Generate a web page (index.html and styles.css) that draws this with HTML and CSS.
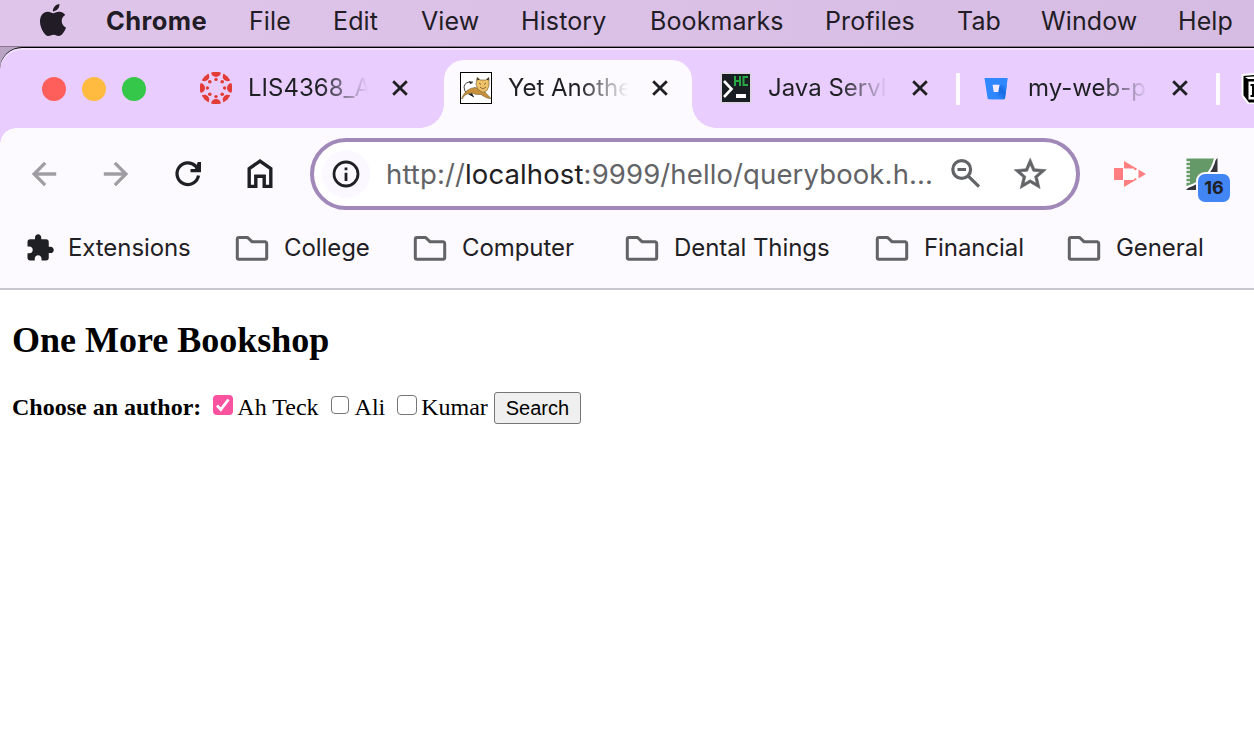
FILE: index.html
```html
<!DOCTYPE html>
<html lang="en">
<head>
<meta charset="utf-8">
<title>Yet Another Bookshop</title>
<link rel="stylesheet" href="styles.css">
</head>
<body>
<svg class="defs" width="0" height="0" aria-hidden="true">
  <symbol id="folder" viewBox="0 0 34 26"><path d="M4 2.500h8.500l4.500 4.200h13a1.700 1.700 0 0 1 1.700 1.700v14.200a1.700 1.700 0 0 1-1.700 1.700H4a1.700 1.700 0 0 1-1.700-1.700V4.200A1.700 1.700 0 0 1 4 2.500z" fill="none" stroke="#626366" stroke-width="3"/></symbol>
  <symbol id="close" viewBox="0 0 16 16"><path d="M1.200 1.200 14.800 14.800M14.800 1.200 1.200 14.800" stroke="#1f2024" stroke-width="2.800" fill="none"/></symbol>
</svg>

<header class="menubar">
  <svg class="apple" viewBox="0 0 24 24"><path fill="#221c26" d="M12.152 6.896c-.948 0-2.415-1.078-3.96-1.04-2.04.027-3.91 1.183-4.961 3.014-2.117 3.675-.546 9.103 1.519 12.09 1.013 1.454 2.208 3.09 3.792 3.039 1.52-.065 2.09-.987 3.935-.987 1.831 0 2.35.987 3.96.948 1.637-.026 2.676-1.48 3.676-2.948 1.156-1.688 1.636-3.325 1.662-3.415-.039-.013-3.182-1.221-3.22-4.857-.026-3.04 2.48-4.494 2.597-4.559-1.429-2.09-3.623-2.324-4.39-2.376-2-.156-3.675 1.09-4.61 1.09zM15.53 3.83c.843-1.012 1.4-2.427 1.245-3.83-1.207.052-2.662.805-3.532 1.818-.78.896-1.454 2.338-1.273 3.714 1.338.104 2.715-.688 3.559-1.701"/></svg>
  <b>Chrome</b><span>File</span><span>Edit</span><span>View</span><span>History</span><span>Bookmarks</span><span>Profiles</span><span>Tab</span><span>Window</span><span>Help</span>
</header>

<div class="window">
  <div class="tabstrip">
    <div class="lights"><i class="red"></i><i class="amber"></i><i class="green"></i></div>
    <div class="tab">
      <svg class="fav" viewBox="-16 -16 32 32"><defs><clipPath id="disc"><circle r="16.200"/></clipPath></defs>
        <g fill="#e33b35" clip-path="url(#disc)"><circle cy="-16" r="5"/><circle cy="16" r="5"/><circle cx="-16" r="5"/><circle cx="16" r="5"/><circle cx="11.600" cy="11.600" r="4.900"/><circle cx="-11.600" cy="11.600" r="4.900"/><circle cx="11.600" cy="-11.600" r="4.900"/><circle cx="-11.600" cy="-11.600" r="4.900"/></g>
        <g fill="#e33b35"><circle cy="-8.600" r="1.700"/><circle cy="8.600" r="1.700"/><circle cx="-8.600" r="1.700"/><circle cx="8.600" r="1.700"/><circle cx="6.200" cy="6.200" r="1.800"/><circle cx="-6.200" cy="6.200" r="1.800"/><circle cx="6.200" cy="-6.200" r="1.800"/><circle cx="-6.200" cy="-6.200" r="1.800"/></g>
      </svg>
      <span class="title">LIS4368_A</span><svg class="x"><use href="#close"/></svg>
    </div>
    <div class="tab active">
      <svg class="fav" viewBox="0 0 32 32"><rect x=".5" y=".5" width="31" height="31" fill="#fff" stroke="#000"/>
        <path d="M13 10Q5 9 4 15Q4 20 8 22M9 22l5 3" fill="none" stroke="#333" stroke-width=".9"/><path d="M9 9l4 2-3 1zM8 22l6 3-2-4z" fill="#222"/>
        <path d="M1.500 26.500Q6 16 15 15.500L22 17L31 26.500Q27 27 21 22.500Q16 23 12 21Q5 21 2 27z" fill="#c8923a" stroke="#775a2b" stroke-width=".6"/>
        <path d="M17 5.500l3.500 2.500h5L29 5.500v8l-2 5-4 2-5-3-2-5z" fill="#f0c267" stroke="#6d5630" stroke-width=".6"/><path d="M19 11l2 1.500M26 11l-2 1.500M20 15l3 2 3-2" stroke="#6b5431" stroke-width=".8" fill="none"/><path d="M17 5.500l2.500 2-2 1zM29 5.500l-2.500 2 2 1z" fill="#222"/></svg>
      <span class="title">Yet Anothe</span><svg class="x"><use href="#close"/></svg>
    </div>
    <div class="tab">
      <svg class="fav" viewBox="0 0 32 32"><rect x=".5" y=".5" width="31" height="31" fill="#dcd3df"/><rect x="2" y="2" width="28" height="28" fill="#191e22"/>
        <path d="M4 9l7.500 8L4 25" fill="none" stroke="#fff" stroke-width="2.600"/><path d="M16 22h10v4H16z" fill="#fff"/><path d="M15 4v10M20 4v10M15 9h5M28 5h-4.500v8H28" fill="none" stroke="#29a744" stroke-width="2"/></svg>
      <span class="title">Java Servl</span><svg class="x"><use href="#close"/></svg><i class="sep"></i>
    </div>
    <div class="tab">
      <svg class="fav" viewBox="0 0 32 32"><defs><linearGradient id="bb" x1="1" y1=".2" x2=".3" y2=".8"><stop offset="0" stop-color="#2a84fb"/><stop offset=".4" stop-color="#1769e0"/><stop offset="1" stop-color="#2f88ff"/></linearGradient></defs><path d="M4.500 6h23.200l-2.700 20.300q-.2.900-1 .9H8.600q-.9 0-1-.9z" fill="#2f88ff"/><path d="M26.800 13h-7.500l-1.300 7.500-7 6.700h13q.8 0 1-.9z" fill="url(#bb)"/><path d="M12.600 12.800h7l-1.300 7.200h-4.600z" fill="#f4eaff"/></svg>
      <span class="title">my-web-p</span><svg class="x"><use href="#close"/></svg><i class="sep"></i>
    </div>
    <div class="tab">
      <svg class="fav" viewBox="0 0 32 32"><path d="M2.500 3L20 1.500l12 8v22H8.500l-6-8z" fill="#000" stroke="#fff" stroke-width="2"/><path d="M8.500 9.500H32v18H8.500z" fill="#fff"/><path d="M5 5L20 4l6 3H8z" fill="#fff"/><path d="M10.500 13h4l6 9v-9M13 13v11M10.500 24h5" stroke="#000" stroke-width="2" fill="none"/></svg>
    </div>
  </div>

  <div class="toolbar">
    <svg class="nav" viewBox="0 0 24 24"><path fill="#9f9ca3" stroke="#9f9ca3" stroke-width=".3" d="M20 11H7.830l5.590-5.590L12 4l-8 8 8 8 1.410-1.410L7.830 13H20z"/></svg>
    <svg class="nav" viewBox="0 0 24 24"><path fill="#9f9ca3" stroke="#9f9ca3" stroke-width=".3" d="M4 11h12.170l-5.590-5.590L12 4l8 8-8 8-1.410-1.410L16.170 13H4z"/></svg>
    <svg class="nav" viewBox="0 0 36 36"><path d="M28.500 19.500A10.800 10.800 0 1 1 25.600 10.200L28 13" fill="none" stroke="#1f2024" stroke-width="3.200"/><path d="M27.800 6H31v10.200H20.500V13h4.500z" fill="#1f2024"/></svg>
    <svg class="nav" viewBox="0 0 36 36"><path d="M7.200 12.700L18 5l10.800 7.700v17.700h-6.600V20.200h-8.400v10.200H7.200z" fill="none" stroke="#1f2024" stroke-width="3.400"/></svg>
    <div class="omnibox">
      <span class="info"><svg viewBox="0 0 28 28"><circle cx="14" cy="14" r="12" fill="none" stroke="#1f2024" stroke-width="2.800"/><path d="M12.600 12.800h2.800V21h-2.800zM12.600 7.500h2.800v2.800h-2.800z" fill="#1f2024"/></svg></span>
      <span class="url">http://<em>localhost</em>:9999/hello/querybook.h...</span>
      <svg class="glass" viewBox="0 0 32 32"><circle cx="11.700" cy="11.500" r="8.900" fill="none" stroke="#626366" stroke-width="3.200"/><path d="M18 17.800L29 28.600M7.500 11.500H16" fill="none" stroke="#626366" stroke-width="3.200"/></svg>
      <svg class="star" viewBox="0 0 24 24"><path fill="#626366" stroke="#626366" stroke-width=".4" d="M22 9.240l-7.190-.62L12 2 9.190 8.630 2 9.240l5.460 4.730L5.820 21 12 17.270 18.180 21l-1.630-7.030zM12 15.400l-3.760 2.270 1-4.280-3.320-2.880 4.380-.38L12 6.100l1.710 4.040 4.380.38-3.320 2.880 1 4.280z"/></svg>
    </div>
    <svg class="rec" viewBox="0 0 32 26"><path d="M0 7h9v12H0zM10 0l22 13-22 13z" fill="#ff7f80"/><path d="M10 7.500h9.500l1.500 2 3.500-2.500v12.500L21 17l-1.500 2H10z" fill="#fff"/></svg>
    <div class="ext"><svg viewBox="0 0 34 34"><path d="M32.500 1v20L17 33H1z" fill="#35363b"/><path d="M1.500 1.500h28Q25 22 1.500 29.500z" fill="#659a68"/><path d="M30 1.500Q25 23 1 30.500" fill="none" stroke="#fff" stroke-width="2"/><path d="M1 5h4M1 9h4M1 13h4M1 17h4M1 21h4M1 25h4" stroke="#fff" stroke-width="1.600"/></svg><span class="badge">16</span></div>
  </div>

  <nav class="bookmarks">
    <span class="bm"><svg class="puzzle" viewBox="0 0 24 24"><path fill="#1f2024" d="M20.500 11H19V7c0-1.100-.9-2-2-2h-4V3.500C13 2.120 11.880 1 10.500 1S8 2.120 8 3.500V5H4c-1.100 0-1.990.9-1.990 2v3.800H3.500c1.490 0 2.700 1.210 2.700 2.700s-1.210 2.700-2.700 2.700H2V20c0 1.100.9 2 2 2h3.800v-1.500c0-1.490 1.210-2.700 2.700-2.700 1.490 0 2.700 1.210 2.700 2.700V22H17c1.100 0 2-.9 2-2v-4h1.500c1.380 0 2.500-1.120 2.500-2.500S21.880 11 20.500 11z"/></svg>Extensions</span>
    <span class="bm"><svg class="folder"><use href="#folder"/></svg>College</span>
    <span class="bm"><svg class="folder"><use href="#folder"/></svg>Computer</span>
    <span class="bm"><svg class="folder"><use href="#folder"/></svg>Dental Things</span>
    <span class="bm"><svg class="folder"><use href="#folder"/></svg>Financial</span>
    <span class="bm"><svg class="folder"><use href="#folder"/></svg>General</span>
  </nav>

  <main class="page">
    <h2>One More Bookshop</h2>
    <form class="query">
      <b>Choose an author:</b>
      <label class="c1"><span class="box on"><svg viewBox="0 0 20 20"><path d="M4 10.500l3.800 4L15.500 4.500" fill="none" stroke="#fff" stroke-width="2.800"/></svg></span>Ah Teck</label>
      <label class="c2"><span class="box small"></span>Ali</label>
      <label class="c3"><span class="box"></span>Kumar</label>
      <button type="button">Search</button>
    </form>
  </main>
</div>
</body>
</html>
```
FILE: styles.css
```css
* { box-sizing: border-box; }
body {
  margin: 0;
  width: 1254px;
  height: 738px;
  overflow: hidden;
  background: #fff;
  font-family: Inter, "Liberation Sans", sans-serif;
  color: #1f2024;
}
svg { display: block; flex: none; }
.defs { position: absolute; }

.menubar {
  height: 47px;
  display: grid;
  grid-template-columns: 69px 143px 84px 88px 100px 129px 175px 132px 84px 137px 79px;
  padding-left: 37px;
  background: linear-gradient(90deg, #dfc5ea, #d6bce2);
  border-bottom: 1px solid #8b7794;
  font-size: 25px;
  letter-spacing: 0.1px;
  line-height: 42px;
  color: #221c26;
  white-space: nowrap;
}
.menubar b { font-size: 25.500px; letter-spacing: 0.400px; }
.apple { width: 32px; height: 32px; margin-top: 4px; }

.window { background: linear-gradient(#b9a4c4 0 24px, #fff 24px); }
.tabstrip {
  height: 81px;
  display: flex;
  border-top: 1px solid #000;
  border-radius: 22px 0 0 0;
  box-shadow: inset 0 2px 0 #f3e3ff;
  background: #e8cdfe;
  overflow: hidden;
}
.lights { width: 184px; flex: none; display: flex; gap: 16px; padding: 29px 0 0 42px; }
.lights i { width: 24px; height: 24px; border-radius: 50%; }
.red { background: #ff5f5b; }
.amber { background: #febb40; }
.green { background: #34c749; }
.tab {
  position: relative;
  width: 248px;
  height: 68px;
  margin: 12px 12px 0 0;
  padding: 12px 16px 0;
  flex: none;
  display: flex;
  font-size: 24px;
  line-height: 32px;
}
.active { background: #fcfaff; border-radius: 20px 20px 0 0; }
.active::before, .active::after {
  content: "";
  position: absolute;
  bottom: 0;
  width: 24px;
  height: 24px;
}
.active::before { left: -24px; background: radial-gradient(circle at 0 0, transparent 23.500px, #fcfaff 24px); }
.active::after { right: -24px; background: radial-gradient(circle at 100% 0, transparent 23.500px, #fcfaff 24px); }
.fav { width: 32px; height: 32px; margin-right: 16px; }
.title {
  width: 120px;
  white-space: nowrap;
  -webkit-mask-image: linear-gradient(90deg, #000 60%, transparent 100%);
  mask-image: linear-gradient(90deg, #000 60%, transparent 100%);
}
.x { width: 16px; height: 16px; margin: 8px 0 0 24px; }
.sep { position: absolute; right: -8px; top: 13px; width: 4px; height: 32px; border-radius: 1px; background: #fcfaff; }

.toolbar {
  height: 92px;
  display: flex;
  align-items: center;
  padding-left: 26px;
  background: radial-gradient(circle at 100% 100%, #fcfaff 15.500px, #e8cdfe 16px) 0 0 / 16px 16px no-repeat, #fcfaff;
}
.nav { width: 36px; height: 36px; margin-right: 36px; }
.omnibox {
  width: 770px;
  height: 72px;
  margin-left: -4px;
  display: flex;
  align-items: center;
  padding-left: 8px;
  border: 4px solid #a088b8;
  border-radius: 36px;
  background: #fff;
}
.info { width: 48px; height: 48px; border-radius: 50%; background: #fbf8ff; padding: 10px; flex: none; }
.info svg { width: 28px; height: 28px; }
.url { width: 580px; flex: none; padding-left: 16px; font-size: 27.500px; letter-spacing: 0.120px; color: #626366; white-space: nowrap; }
.url em { font-style: normal; color: #1f2024; }
.glass { width: 32px; height: 32px; }
.star { width: 38.400px; height: 38.400px; margin-left: 29px; }
.rec { width: 32px; height: 26px; margin-left: 34px; }
.ext { position: relative; margin-left: 39px; }
.ext svg { width: 34px; height: 34px; }
.badge {
  position: absolute;
  left: 13px;
  top: 17px;
  width: 32px;
  height: 28px;
  border-radius: 7px;
  background: #4285f4;
  box-shadow: 0 0 0 2px #fcfaff;
  text-align: center;
  font: bold 18px/28px Inter, sans-serif;
}

.bookmarks {
  height: 70px;
  display: grid;
  grid-template-columns: 210px 178px 212px 250px 192px 180px;
  padding: 8px 0 0 25px;
  background: #fcfaff;
  border-bottom: 2px solid #cac6ce;
  font-size: 24px;
  letter-spacing: -0.080px;
  line-height: 39px;
  white-space: nowrap;
}
.bm { display: flex; }
.puzzle { width: 30px; height: 30px; margin: 5px 13px 0 0; }
.folder { width: 34px; height: 26px; margin: 7px 15px 0 0; }

.page {
  padding: 0 12px;
  font-family: "Liberation Serif", serif;
  color: #000;
  background: #fff;
}
.page h2 { margin: 0; padding-top: 29px; font-size: 36px; line-height: 42px; }
.query { display: flex; margin-top: 31px; font-size: 24px; line-height: 30px; white-space: nowrap; }
.query label { display: flex; }
.c1 { margin-left: 12px; }
.c2 { margin-left: 12px; }
.c3 { margin-left: 12px; }
.box { width: 20px; height: 20px; margin: 3px 4px 0 0; border: 1.500px solid #767676; border-radius: 4px; }
.on { border: 0; background: #fb52a0; }
.on svg { width: 20px; height: 20px; }
.small { width: 18px; height: 18px; margin: 4px 6px 0 0; }
.query button {
  width: 87px;
  height: 32px;
  margin-left: 6px;
  padding: 0;
  border: 1px solid #767676;
  border-radius: 3px;
  background: #efefef;
  color: #000;
  font: 20px "Liberation Sans", sans-serif;
}
```
